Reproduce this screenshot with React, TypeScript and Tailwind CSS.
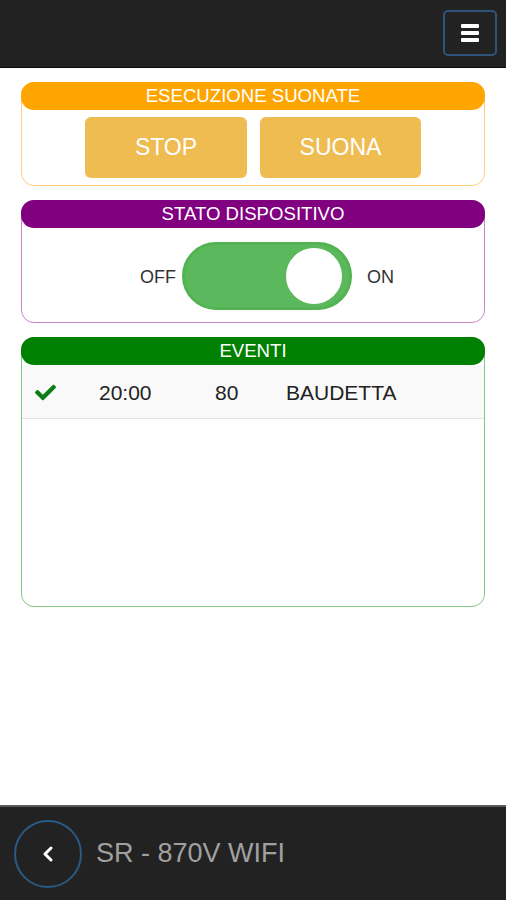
import React from "react";
import { FaCheck } from "react-icons/fa";

function Card({
  title,
  head,
  border,
  children,
  bodyClass,
}: {
  title: string;
  head: string;
  border: string;
  children: React.ReactNode;
  bodyClass: string;
}) {
  return (
    <div className={`rounded-[13px] border ${border} bg-white`}>
      <div
        className={`-mx-px -mt-px h-[28px] rounded-[13px] ${head} flex items-center justify-center text-white text-[18.6px] leading-none`}
      >
        {title}
      </div>
      <div className={bodyClass}>{children}</div>
    </div>
  );
}

export default function App() {
  return (
    <div
      className="w-[506px] h-[900px] flex flex-col bg-white overflow-hidden"
      style={{ fontFamily: '"Liberation Sans", Arial, sans-serif' }}
    >
      {/* top bar */}
      <div className="h-[68px] shrink-0 bg-[#222222] border-b border-[#0a0a0a] flex items-start justify-end pr-[9px] pt-[10px]">
        <div className="w-[54px] h-[46px] rounded-[5px] border-2 border-[#2f5479] flex flex-col items-center justify-center gap-[3px]">
          <div className="w-[18px] h-[4px] rounded-[1px] bg-white" />
          <div className="w-[18px] h-[4px] rounded-[1px] bg-white" />
          <div className="w-[18px] h-[4px] rounded-[1px] bg-white" />
        </div>
      </div>

      {/* content */}
      <div className="flex-1 px-[21px] pt-[14px] flex flex-col gap-[14px]">
        <Card
          title="ESECUZIONE SUONATE"
          head="bg-[#ffa500]"
          border="border-[#ffcf80]"
          bodyClass="flex justify-center gap-[13px] pt-[7px] pb-[7px]"
        >
          <div className="w-[162px] h-[61px] rounded-[6px] bg-[#efbc52] flex items-center justify-center text-white text-[23px]">
            STOP
          </div>
          <div className="w-[161px] h-[61px] rounded-[6px] bg-[#efbc52] flex items-center justify-center text-white text-[23px]">
            SUONA
          </div>
        </Card>

        <Card
          title="STATO DISPOSITIVO"
          head="bg-[#800080]"
          border="border-[#c585c5]"
          bodyClass="flex items-center justify-center pl-[28px] pt-[14px] pb-[12px]"
        >
          <span className="text-[18px] text-[#333] mr-[6px] mt-[2px]">OFF</span>
          <div className="w-[170px] h-[68px] rounded-full bg-[#5cb85c] border-[3px] border-[#52b352] flex items-center justify-end">
            <div className="w-[62px] h-[62px] mr-[4px] rounded-full bg-white border-[3px] border-[#5cb85c]" />
          </div>
          <span className="text-[18px] text-[#333] ml-[15px] mt-[2px]">ON</span>
        </Card>

        <Card
          title="EVENTI"
          head="bg-[#008000]"
          border="border-[#85c585]"
          bodyClass="h-[241px]"
        >
          <div className="h-[54px] bg-[#f9f9f9] border-b border-[#e2e2e2] flex items-center pl-[13px] pt-[2px] text-[21px] text-[#222]">
            <div className="w-[64px] flex items-center">
              <FaCheck className="text-[#0a7d14] w-[21px] h-[21px]" />
            </div>
            <div className="w-[116px]">20:00</div>
            <div className="w-[71px]">80</div>
            <div>BAUDETTA</div>
          </div>
        </Card>
      </div>

      {/* bottom bar */}
      <div className="h-[95px] shrink-0 bg-[#222222] border-t-2 border-[#5a5a5a] flex items-center pl-[14px]">
        <div className="w-[68px] h-[68px] rounded-full border-2 border-[#2c5a84] flex items-center justify-center">
          <svg width="12" height="16" viewBox="0 0 12 16">
            <path d="M9 2 L3 8 L9 14" stroke="white" strokeWidth="3" fill="none" strokeLinecap="round" strokeLinejoin="round" />
          </svg>
        </div>
        <span className="ml-[14px] text-[27px] text-[#a0a0a0]">SR - 870V WIFI</span>
      </div>
    </div>
  );
}
